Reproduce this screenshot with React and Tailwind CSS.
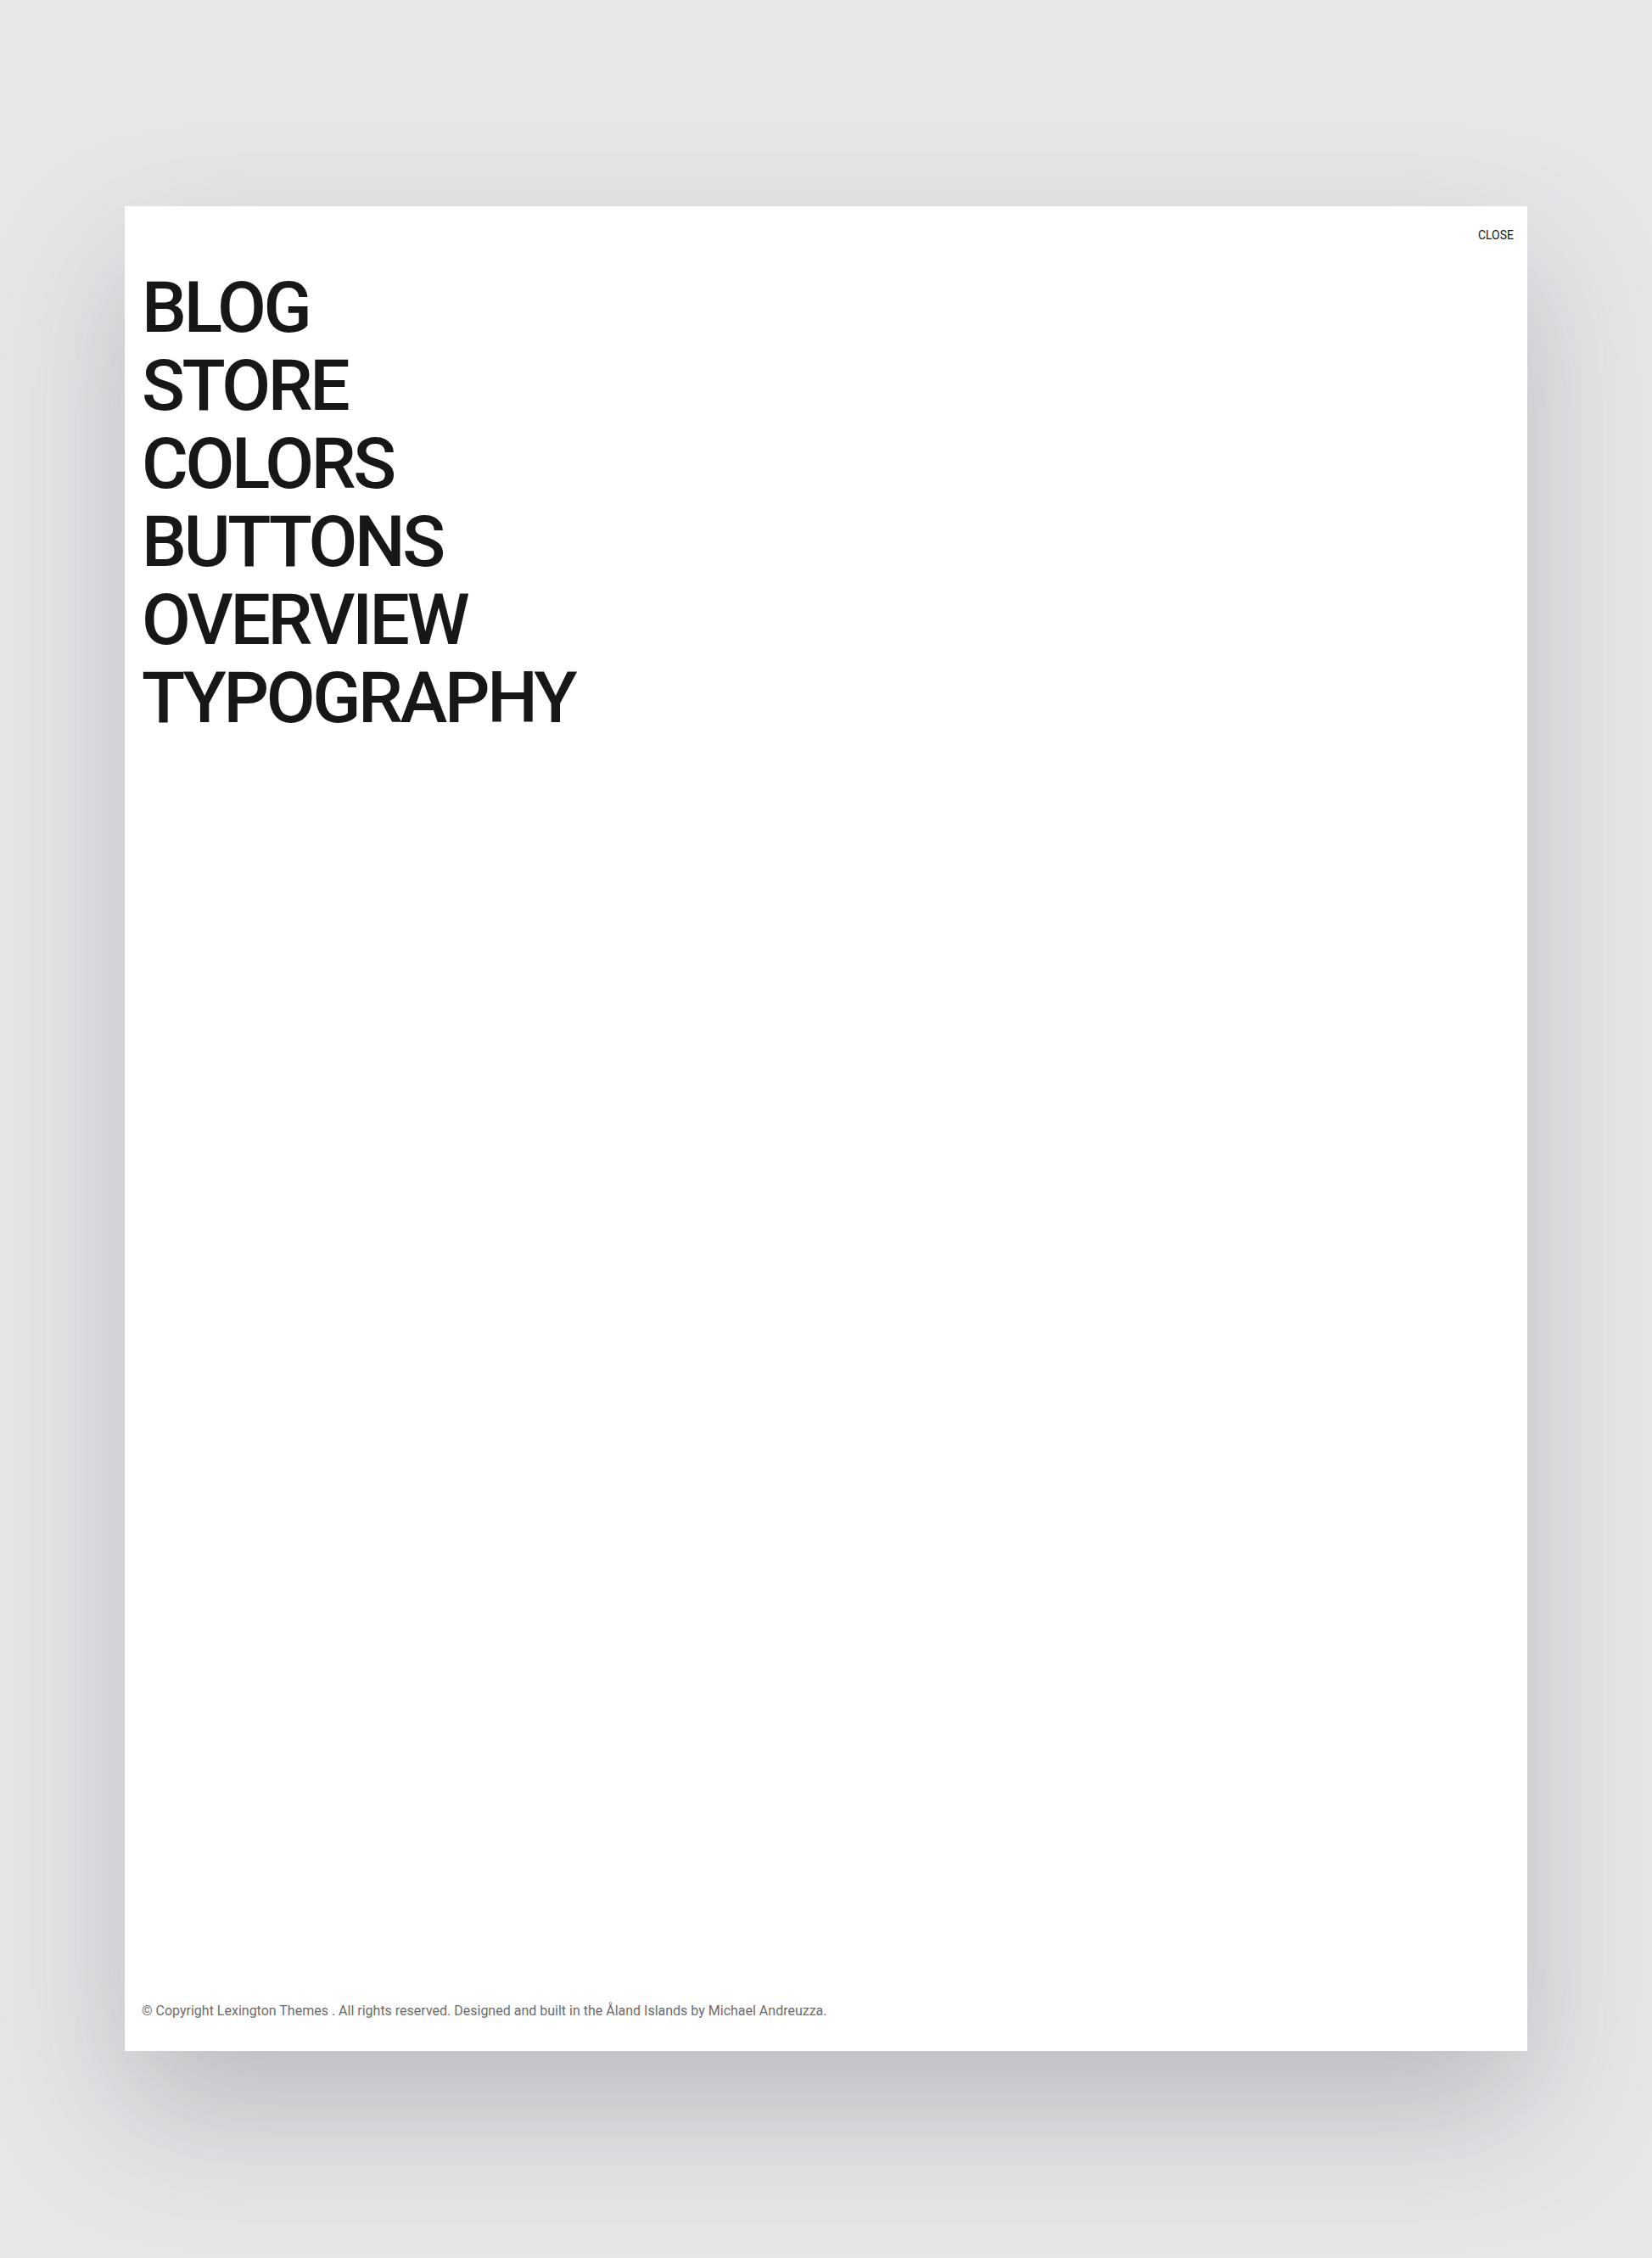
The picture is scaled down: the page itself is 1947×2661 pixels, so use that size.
import React from "react";

const links = ["BLOG", "STORE", "COLORS", "BUTTONS", "OVERVIEW", "TYPOGRAPHY"];

const App = () => {
  return (
    <div
      className="min-h-[2661px] w-full bg-[#e6e7e9] px-[147px] py-[243px]"
      style={{ fontFamily: "Roboto, 'Liberation Sans', sans-serif" }}
    >
      <div className="flex h-[2174px] flex-col bg-white shadow-[0_70px_150px_rgba(60,66,76,0.26)]">
        {/* Top bar */}
        <div className="flex justify-end pr-4 pt-6">
          <button className="text-[14px] font-normal leading-5 text-[#171717]">
            CLOSE
          </button>
        </div>

        {/* Menu */}
        <nav className="mt-[30px] flex flex-col px-5">
          {links.map((link) => (
            <a
              key={link}
              href="#"
              className="text-[84px] font-medium leading-[92px] tracking-[-0.04em] text-[#171717]"
            >
              {link}
            </a>
          ))}
        </nav>

        <div className="flex-1" />

        {/* Footer */}
        <footer className="px-5 pb-[35px]">
          <p className="text-[16px] leading-6 text-[#6b6b6b]">
            © Copyright Lexington Themes . All rights reserved. Designed and
            built in the Åland Islands by Michael Andreuzza.
          </p>
        </footer>
      </div>
    </div>
  );
};

export default App;
